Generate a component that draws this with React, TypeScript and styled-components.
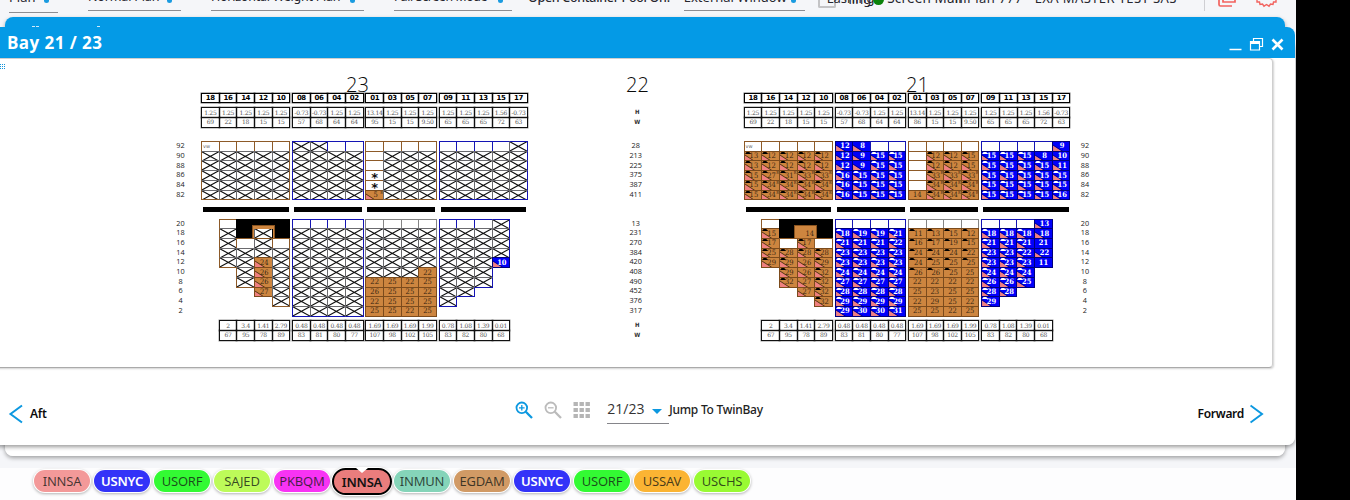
import React from 'react';
import styled, { createGlobalStyle, css } from 'styled-components';

const Global = createGlobalStyle`
  * { box-sizing: border-box; }
  body { margin: 0; background: #000; font-family: "Noto Sans", "Open Sans", sans-serif; overflow: hidden; }
`;

/* ---------- application shell ---------- */

const Screen = styled.div`
  position: relative;
  width: 1296px;
  height: 500px;
  overflow: hidden;
  background: #f5f6f9;
  display: flex;
  flex-direction: column;
  justify-content: space-between;
`;

const Toolbar = styled.div`
  height: 17px;
  display: flex;
  align-items: flex-start;
  overflow: hidden;
  color: #26262e;
`;

const Select = styled.div<{ $w: number; $ml: number; $h?: number }>`
  flex: none;
  width: ${p => p.$w}px;
  height: ${p => p.$h ?? 11}px;
  margin-left: ${p => p.$ml}px;
  border-bottom: 1px solid #8d8d92;
  display: flex;
  justify-content: space-between;
  padding-right: 9px;
  overflow: hidden;
`;

const ToolText = styled.span<{ $size?: number; $up?: number; $ls?: number; $strong?: boolean; $ml?: number }>`
  flex: none;
  display: block;
  white-space: pre;
  font-size: ${p => p.$size ?? 13}px;
  line-height: 18px;
  height: 18px;
  letter-spacing: ${p => p.$ls ?? 0}px;
  font-weight: ${p => (p.$strong ? 500 : 400)};
  margin-top: -${p => p.$up ?? 12}px;
  margin-left: ${p => p.$ml ?? 0}px;
`;

const CaretTip = styled.i`
  width: 5px;
  height: 4px;
  margin-top: -1px;
  border-radius: 0 0 3px 3px;
  background: #1a9be0;
`;

const CheckTip = styled.i`
  flex: none;
  width: 18px;
  height: 8px;
  margin-left: 13px;
  border: 2px solid #c4c4c6;
  border-top: 0;
  border-radius: 0 0 2px 2px;
`;

const Dot = styled.i`
  flex: none;
  width: 11px;
  height: 11px;
  border-radius: 50%;
  margin: -6px 3px 0 2px;
  background: #0a820a;
`;

const Rule = styled.i`
  flex: none;
  width: 1px;
  height: 11px;
  margin-left: auto;
  margin-right: 12px;
  background: #cfcfd3;
`;

const ToolIcons = styled.svg`
  flex: none;
  margin-right: 19px;
`;

/* ---------- floating windows ---------- */

const BackWindow = styled.div`
  position: absolute;
  left: 5px;
  top: 17px;
  width: 1280px;
  height: 439px;
  border-radius: 8px;
  background: linear-gradient(#049ae6 0 30px, #fff 30px);
  box-shadow: 0 2px 4px rgba(0, 0, 0, 0.35);
`;

const HiddenTitle = styled.div`
  display: flex;
  padding: 9px 0 0 27px;
  i { height: 1px; background: #cfeafa; width: 3px; margin-right: 1px; }
  i:last-child { margin-left: 57px; }
`;

const Window = styled.div`
  position: absolute;
  left: -10px;
  top: 27px;
  width: 1305px;
  height: 418px;
  border-radius: 8px;
  overflow: hidden;
  background: #fff;
  display: flex;
  flex-direction: column;
`;

const WindowShadow = styled.div`
  position: absolute;
  left: -10px;
  top: 40px;
  width: 1305px;
  height: 405px;
  border-radius: 0 8px 8px 0;
  box-shadow: 0 2px 4px rgba(0, 0, 0, 0.4);
`;

const TitleBar = styled.div`
  height: 31px;
  flex: none;
  background: #049ae6;
  display: flex;
  justify-content: space-between;
  padding: 0 11px 0 17px;
`;

const WindowTitle = styled.h1`
  margin: 4px 0 0;
  font: 700 17px/24px "Open Sans", "Noto Sans", sans-serif;
  letter-spacing: 0.45px;
  color: #fff;
`;

const Controls = styled.div`
  display: flex;
  padding-top: 10px;
`;

const Panel = styled.div`
  flex: none;
  width: 1283px;
  height: 310px;
  border: 1px solid #cfcfcf;
  border-bottom-color: #aaa;
  border-radius: 4px;
  box-shadow: 1px 1px 2px rgba(0, 0, 0, 0.18);
  padding-left: 9px;
`;

const PanelTop = styled.div`
  display: flex;
  height: 34px;
`;

const Grip = styled.div`
  width: 6px;
  height: 6px;
  margin: 5px 211px 0 0;
  background:
    repeating-linear-gradient(transparent 0 1px, #fff 1px 2px),
    repeating-linear-gradient(90deg, #1295dc 0 1px, transparent 1px 2px);
`;

const BayNo = styled.div`
  width: 280px;
  padding: 13px 0 0 1px;
  text-align: center;
  font: 300 20px/26px "Open Sans", "Noto Sans", sans-serif;
  color: #0a0a0a;
`;

const Board = styled.div`
  display: flex;
  padding-left: 160px;
`;

/* ---------- bay plan ---------- */

const Plan = styled.div`
  width: 326.8px;
  flex: none;
`;

const Strip = styled.div<{ $mt: number; $h: number }>`
  display: flex;
  margin-top: ${p => p.$mt}px;
  height: ${p => p.$h}px;
`;

const Group = styled.div<{ $cols: number; $pad?: boolean; $rows: number }>`
  flex: none;
  display: grid;
  width: ${p => (p.$cols + (p.$pad ? 1 : 0)) * 17.75}px;
  padding-left: ${p => (p.$pad ? 17.75 : 0)}px;
  padding-right: 0.5px;
  margin-right: 2.3px;
  grid-template-columns: repeat(${p => p.$cols}, minmax(0, 1fr));
  grid-template-rows: repeat(${p => p.$rows}, minmax(0, 1fr));
`;

const boxed = css`
  display: flex;
  align-items: center;
  justify-content: center;
  margin: 0 -1px -1px 0;
  white-space: nowrap;
  overflow: hidden;
`;

const HeadCell = styled.div`
  ${boxed}
  border: 1px solid #000;
  box-shadow: 0 0 0 0.5px rgba(0, 0, 0, 0.55);
  font: 700 7px/8px "DejaVu Sans", sans-serif;
  letter-spacing: -0.4px;
  color: #000;
`;

const DataCell = styled.div`
  ${boxed}
  border: 1px solid #111;
  box-shadow: 0 0 0 0.5px rgba(0, 0, 0, 0.4);
  font: 400 6px/8px "DejaVu Serif", serif;
  letter-spacing: -0.3px;
  color: #555;
`;

type Tone = 'brown' | 'blue' | 'grey';
const line: Record<Tone, string> = { brown: '#8d5a28', blue: '#1414b4', grey: '#858585' };

interface Edges { top: boolean; right: boolean; bottom: boolean; left: boolean }

const Slot = styled.div<{ $tone: Tone; $kind: 'gap' | 'open' | 'cross' | 'load' | 'hatch'; $edges: Edges }>`
  ${boxed}
  position: relative;
  border: 1px solid ${p => line[p.$tone]};
  font: 400 7.5px/8px "DejaVu Sans Condensed", "DejaVu Sans", sans-serif;
  color: #111;
  ${p => p.$kind === 'gap' && css`visibility: hidden;`}
  ${p => p.$kind === 'open' && css`background: #fff;`}
  ${p => p.$kind === 'cross' && css`
    background: #fff;
    border-color: ${(['top', 'right', 'bottom', 'left'] as const).map(s => (p.$edges[s] ? line[p.$tone] : '#6a6a6e')).join(' ')};
  `}
  ${p => p.$kind === 'hatch' && css`background: #000; border-color: #000;`}
  ${p => p.$kind === 'load' && (p.$tone === 'blue'
    ? css`background: #0000fa; border-color: #00007c; color: #fff; font: 700 7.5px/8px "DejaVu Serif Condensed", "DejaVu Serif", serif;`
    : css`background: #cd853f; border-color: #7c4b1c; color: #3b2813; font: 400 7.5px/8px "DejaVu Serif Condensed", "DejaVu Serif", serif;`)}
`;

const Mark = styled.svg`
  position: absolute;
  left: -1px;
  top: -1px;
  width: calc(100% + 2px);
  height: calc(100% + 2px);
`;

const Value = styled.span<{ $shift?: boolean }>`
  position: relative;
  padding-left: ${p => (p.$shift ? 2 : 0)}px;
`;

const Star = styled.b`
  font: 700 13px/8px "DejaVu Sans", sans-serif;
  padding-top: 5px;
`;

const Tiny = styled.sup`
  position: absolute;
  right: 0;
  top: -1px;
  font-size: 4px;
  line-height: 5px;
`;

const Note = styled.span`
  font: 400 5px/6px "DejaVu Sans", sans-serif;
  color: #666;
  margin-right: auto;
  padding-left: 1px;
`;

const Bar = styled.div<{ $cols: number }>`
  flex: none;
  width: ${p => p.$cols * 17.75 - 3}px;
  margin: 0 3.3px 0 2px;
  background: #000;
`;

const Riser = styled.div<{ $filled: boolean }>`
  position: absolute;
  left: 50.5px;
  top: 6px;
  width: 23px;
  height: 14px;
  border: solid #cd853f;
  border-width: 4px 2px 0;
  outline: 1px solid #8a5420;
  outline-offset: -1px;
  background: ${p => (p.$filled ? '#cd853f' : 'transparent')};
  font: 400 7.5px/9px "DejaVu Serif Condensed", serif;
  color: #3b2813;
  text-align: right;
  padding-right: 1px;
`;

const Lower = styled.div`
  position: relative;
`;

/* Slot notation: "." no slot, "_" free, "x" blocked, "#" structure;
   otherwise a value followed by t (corner), c (cap) and r (reefer note). */
function SlotView({ code, tone, edges }: { code: string; tone: Tone; edges: Edges }) {
  const kind = code === '.' ? 'gap' : code === 'x' ? 'cross' : code === '#' ? 'hatch'
    : /^\d/.test(code) ? 'load' : 'open';
  const corner = kind === 'load' && code.includes('t');
  const cap = kind === 'load' && code.includes('c');
  return (
    <Slot $tone={tone} $kind={kind} $edges={edges}>
      {kind === 'cross' && (
        <Mark viewBox="0 0 18 10" preserveAspectRatio="none">
          <path d="M0.5 0.5 17.5 9.5M0.5 9.5 17.5 0.5" stroke="#111" strokeWidth="1.05" fill="none" />
        </Mark>
      )}
      {(corner || cap) && (
        <Mark viewBox="0 0 18 10" preserveAspectRatio="none">
          {corner && <path d="M1 4.2V9.5H9.5Z" fill="#f08080" />}
          {corner && <path d="M1 3.8 11 10" stroke={tone === 'blue' ? '#00006a' : '#2c1a0a'} strokeWidth="0.7" />}
          {cap && <path d="M1 2.8 2.5 1H5L7 2.8Z" fill={tone === 'blue' ? '#fff' : '#000'} />}
        </Mark>
      )}
      {kind === 'load' && <Value $shift={corner || cap}>{parseInt(code, 10)}</Value>}
      {code.includes('r') && <Tiny>R</Tiny>}
      {code === '*' && <Star>*</Star>}
      {code === 'vv' && <Note>vw</Note>}
    </Slot>
  );
}

interface Block { tone: Tone; cols: number; pad?: boolean; rows: string[] }

function BlockView({ block }: { block: Block }) {
  const cells = block.rows.map(r => r.split(' '));
  const empty = (y: number, x: number) => (cells[y]?.[x] ?? '.') === '.';
  return (
    <Group $cols={block.cols} $rows={cells.length} $pad={block.pad}>
      {cells.flatMap((r, y) => r.map((c, x) => (
        <SlotView
          key={`${y}-${x}`}
          code={c}
          tone={block.tone}
          edges={{ top: empty(y - 1, x), right: empty(y, x + 1), bottom: empty(y + 1, x), left: empty(y, x - 1) }}
        />
      )))}
    </Group>
  );
}

const heads = ['18 16 14 12 10', '08 06 04 02', '01 03 05 07', '09 11 13 15 17'];
const topFigures = (edge: string) => [
  ['1.25 1.25 1.25 1.25 1.25', '69 22 18 15 15'],
  ['-0.73 -0.73 1.25 1.25', '57 68 64 64'],
  ['13.14 1.25 1.25 1.25', `${edge} 15 15 9.50`],
  ['1.25 1.25 1.25 1.56 -0.73', '65 65 65 72 63'],
];
const bottomFigures = [
  ['2 3.4 1.41 2.79', '67 95 78 89'],
  ['0.48 0.48 0.48 0.48', '83 81 80 77'],
  ['1.69 1.69 1.69 1.99', '107 98 102 105'],
  ['0.78 1.08 1.39 0.01', '83 82 80 68'],
];

const X5 = 'x x x x x';
const X4 = 'x x x x';

const bay23: { top: Block[]; bottom: Block[] } = {
  top: [
    { tone: 'brown', cols: 5, rows: ['vv _ _ _ _', X5, X5, X5, X5, X5] },
    { tone: 'blue', cols: 4, rows: ['x x _ _', X4, X4, X4, X4, X4] },
    { tone: 'brown', cols: 4, rows: ['_ _ _ _', '_ x x x', '_ x x x', '* x x x', '* x x x', '5tr x x x'] },
    { tone: 'blue', cols: 5, rows: ['_ _ _ _ x', X5, X5, X5, X5, X5] },
  ],
  bottom: [
    { tone: 'brown', cols: 4, pad: true, rows: ['_ # # #', 'x # x #', 'x _ x _', X4, 'x x 24t x', '. x 26t x', '. x 26t x', '. . 27t x', '. . . x', '. . . .'] },
    { tone: 'blue', cols: 4, rows: ['_ _ _ _', X4, X4, X4, X4, X4, X4, X4, X4, X4] },
    { tone: 'grey', cols: 4, rows: ['_ _ _ _', X4, X4, X4, X4, 'x x x 22', '22 25 22 25', '26 25 25 22', '22 25 25 25', '25 25 22 25'] },
    { tone: 'blue', cols: 4, rows: ['_ _ _ x', X4, X4, X4, 'x x x 10t', 'x x x .', 'x x x .', 'x x . .', 'x . . .', '. . . .'] },
  ],
};

const bay21: { top: Block[]; bottom: Block[] } = {
  top: [
    { tone: 'brown', cols: 5, rows: ['vv _ _ _ _', '13tc 12tc 12tc 12tc 12tc', '13tc 12tc 12tc 12tc 12tc', '15tc 27tcr 31tcr 33tcr 33tcr', '15tc 34tcr 34tcr 34tcr 34tcr', '15tc 34tcr 34tcr 34tcr 34tcr'] },
    { tone: 'blue', cols: 4, rows: ['12t 8t _ _', '12t 9t 15tc 15tc', '12t 9t 15tc 15tc', '16tc 15tc 15tc 15tc', '16tc 15tc 15tc 15tc', '16tc 15tc 15tc 15tc'] },
    { tone: 'brown', cols: 4, rows: ['_ _ _ _', '_ 12tc 12tc 15tc', '_ 12tc 12tc 15tc', '_ 33tcr 33tcr 33tcr', '_ 34tcr 34tcr 34tcr', '14 34tcr 34tcr 34tcr'] },
    { tone: 'blue', cols: 5, rows: ['_ _ _ _ 9t', '15tc 15tc 15tc 8t 10t', '15tc 15tc 15tc 15tc 11t', '15tc 15tc 15tc 15tc 15tc', '15tc 15tc 15tc 15tc 15tc', '15tc 15tc 15tc 15tc 16tc'] },
  ],
  bottom: [
    { tone: 'brown', cols: 4, pad: true, rows: ['_ # # #', '15tc # # #', '17tc _ 17tc _', '25tc 28tc 28tc 28tc', '29tc 29tc 26t 29tc', '. 29tc 26t 32tc', '. 32tc 27t 32tc', '. . 27t 32tc', '. . . 32tc', '. . . .'] },
    { tone: 'blue', cols: 4, rows: ['_ _ _ _', '18tc 19tc 19tc 21tc', '21tc 21tc 21tc 22tc', '23tc 23tc 23tc 23tc', '23tc 23tc 23tc 23tc', '24tc 24tc 24tc 24tc', '27tc 27tc 27tc 27tc', '28tc 28tc 28tc 28tc', '29tc 29tc 29tc 29tc', '29tc 30tc 30tc 31tc'] },
    { tone: 'grey', cols: 4, rows: ['_ _ _ _', '11c 13c 15c 12c', '16c 17c 19c 15c', '24c 24c 24c 22c', '24c 25c 25c 25c', '26c 26c 25c 25', '22 22 22 22', '25 23 25 25', '22 29 25 22', '25 25 22 25'] },
    { tone: 'blue', cols: 4, rows: ['_ _ _ 13t', '18tc 18tc 18tc 18t', '21tc 21tc 21tc 21', '23tc 23tc 22tc 22t', '23tc 23tc 23tc 11', '24tc 24tc 24tc .', '26tc 26tc 25tc .', '28tc 28tc . .', '29tc . . .', '. . . .'] },
  ],
};

function Figures({ groups, mt, pad }: { groups: string[][]; mt: number; pad?: boolean }) {
  return (
    <Strip $mt={mt} $h={19.5}>
      {groups.map((g, i) => (
        <Group key={i} $cols={g[0].split(' ').length} $rows={2} $pad={pad && i === 0}>
          {g.flatMap((r, y) => r.split(' ').map((v, x) => <DataCell key={`${y}-${x}`}>{v}</DataCell>))}
        </Group>
      ))}
    </Strip>
  );
}

function BayPlan({ bay, edge, riser }: { bay: typeof bay23; edge: string; riser?: string }) {
  return (
    <Plan>
      <Strip $mt={0} $h={9.3}>
        {heads.map(h => (
          <Group key={h} $cols={h.split(' ').length} $rows={1}>
            {h.split(' ').map(v => <HeadCell key={v}>{v}</HeadCell>)}
          </Group>
        ))}
      </Strip>
      <Figures groups={topFigures(edge)} mt={5} />
      <Strip $mt={14} $h={58.7}>{bay.top.map((b, i) => <BlockView key={i} block={b} />)}</Strip>
      <Strip $mt={7.3} $h={5}>{[5, 4, 4, 5].map((n, i) => <Bar key={i} $cols={n} />)}</Strip>
      <Lower>
        <Strip $mt={6.8} $h={97.2}>{bay.bottom.map((b, i) => <BlockView key={i} block={b} />)}</Strip>
        <Riser $filled={!!riser}>{riser}</Riser>
      </Lower>
      <Figures groups={bottomFigures} mt={4.6} pad />
    </Plan>
  );
}

/* ---------- row labels ---------- */

const Labels = styled.div<{ $w: number; $pl?: number }>`
  flex: none;
  width: ${p => p.$w}px;
  padding-left: ${p => p.$pl ?? 0}px;
  padding-top: 48.3px;
  text-align: center;
  font: 400 7.3px/9.68px "Open Sans", "Noto Sans", sans-serif;
  color: #222;
`;

const LabelSet = styled.div`
  height: 77.3px;
`;

const Units = styled.div`
  margin-top: -34px;
  height: 34px;
  padding-left: 3px;
  font: 700 6px/10px "DejaVu Sans Condensed", "DejaVu Sans", sans-serif;
  color: #333;
`;

const FootUnits = styled(Units)`
  margin-top: 24px;
  height: 20px;
`;

const upperRows = [92, 90, 88, 86, 84, 82];
const lowerRows = [20, 18, 16, 14, 12, 10, 8, 6, 4, 2];

function LabelColumn({ width, shift, upper, lower, units }: { width: number; shift?: number; upper: number[]; lower: number[]; units?: boolean }) {
  return (
    <Labels $w={width} $pl={shift}>
      {units && <Units><div>H</div><div>W</div></Units>}
      <LabelSet>{upper.map((v, i) => <div key={i}>{v}</div>)}</LabelSet>
      <LabelSet>{lower.map((v, i) => <div key={i}>{v}</div>)}</LabelSet>
      {units && <FootUnits><div>H</div><div>W</div></FootUnits>}
    </Labels>
  );
}

/* ---------- window footer ---------- */

const Footer = styled.div`
  flex: 1;
  display: flex;
  justify-content: space-between;
  padding: 32px 31px 0 18px;
  font: 500 12px/18px "Noto Sans", sans-serif;
  color: #0b0b0b;
`;

const NavButton = styled.div`
  display: flex;
  align-items: center;
  height: 28px;
  gap: 6px;
  font-weight: 600;
  font-size: 12px;
  letter-spacing: -0.3px;
`;

const Tools = styled.div`
  display: flex;
  align-items: flex-start;
  margin-left: 34px;
`;

const Magnify = styled.svg`
  flex: none;
  margin: 1px 11px 0 0;
`;

const Dots = styled.svg`
  flex: none;
  margin-top: 1px;
`;

const Jump = styled.div`
  display: flex;
  width: 62px;
  height: 24px;
  margin-left: 17px;
  justify-content: space-between;
  border-bottom: 1px solid #85858a;
  font: 400 14px/17px "Open Sans", "Noto Sans", sans-serif;
  color: #333;
  padding-right: 7px;
`;

const Caret = styled.i`
  margin-top: 9px;
  width: 0;
  height: 0;
  border: solid transparent;
  border-width: 5px 5px 0;
  border-top-color: #0c98e0;
`;

const JumpLabel = styled.span`
  font-size: 12px;
  font-weight: 500;
  line-height: 20px;
  letter-spacing: -0.25px;
  color: #222;
`;

/* ---------- port legend ---------- */

const Legend = styled.div`
  height: 32px;
  background: #fdfdfe;
  display: flex;
  align-items: flex-start;
  padding: 2px 0 0 34px;
  gap: 4px;
`;

const Pill = styled.div<{ $bg: string; $bold?: boolean; $active?: boolean }>`
  position: relative;
  flex: none;
  width: 56px;
  height: 22px;
  border-radius: 11px;
  background: ${p => p.$bg};
  color: ${p => (p.$active ? '#111' : p.$bold ? '#fff' : 'rgba(20, 25, 20, 0.78)')};
  font: ${p => (p.$bold || p.$active ? 600 : 400)} 13px/22px "Noto Sans", sans-serif;
  letter-spacing: -0.2px;
  text-align: center;
  white-space: nowrap;
  box-shadow: 0 0 0 1px #fff, 0 1px 3px 1px rgba(0, 0, 0, 0.3);
  ${p => p.$active && css`
    width: 60px;
    height: 27px;
    margin: -2px -2px 0;
    line-height: 25px;
    border: 2px solid #000;
    border-radius: 14px;
    &::before {
      content: '';
      position: absolute;
      left: 22px;
      top: -2px;
      border: solid transparent;
      border-width: 5px 6px 0;
      border-top-color: #fff;
    }
  `}
`;

const ports: { name: string; bg: string; bold?: boolean; active?: boolean }[] = [
  { name: 'INNSA', bg: '#f39999' },
  { name: 'USNYC', bg: '#3333f8', bold: true },
  { name: 'USORF', bg: '#33fa33' },
  { name: 'SAJED', bg: '#bdfb59' },
  { name: 'PKBQM', bg: '#f833f4' },
  { name: 'INNSA', bg: '#ea7d7d', active: true },
  { name: 'INMUN', bg: '#85d4b9' },
  { name: 'EGDAM', bg: '#d19a65' },
  { name: 'USNYC', bg: '#3333f8', bold: true },
  { name: 'USORF', bg: '#33fa33' },
  { name: 'USSAV', bg: '#fbb433' },
  { name: 'USCHS', bg: '#99fa33' },
];

const Magnifier = ({ color, plus }: { color: string; plus?: boolean }) => (
  <Magnify width="18" height="18" viewBox="0 0 18 18" fill="none" stroke={color}>
    <circle cx="6.8" cy="6.8" r="5.3" strokeWidth="1.8" />
    <path d="M10.8 10.8 17 17" strokeWidth="2.3" />
    <path d={plus ? 'M4 6.8H9.6M6.8 4V9.6' : 'M4 6.8H9.6'} strokeWidth="1.3" />
  </Magnify>
);

export default function App() {
  return (
    <>
      <Global />
      <Screen>
        <Toolbar>
          <Select $w={49} $ml={9} $h={13}><ToolText $up={12}>Plan</ToolText><CaretTip /></Select>
          <Select $w={93} $ml={30}><ToolText $up={12} $size={12.6} $ls={-0.2}>Normal Plan</ToolText><CaretTip /></Select>
          <Select $w={153} $ml={30}><ToolText $up={12} $size={12.5} $ls={-0.25}>Horizontal Weight Plan</ToolText><CaretTip /></Select>
          <Select $w={118} $ml={30}><ToolText $up={12} $size={12.3} $ls={-0.35}>Full Screen Mode</ToolText><CaretTip /></Select>
          <ToolText $ml={16} $up={11} $size={12.5} $strong $ls={-0.3}>Open Container Pool On:</ToolText>
          <Select $w={121} $ml={14}><ToolText $up={12}>External Window</ToolText><CaretTip /></Select>
          <CheckTip />
          <ToolText $ml={-9} $up={11} $size={13}>Lashing</ToolText>
          <ToolText $ml={-26} $up={10} $size={13}>ling</ToolText>
          <Dot />
          <ToolText $up={11} $size={13.5} $ls={0.15}>Screen Main</ToolText>
          <ToolText $ml={-12} $up={11} $size={13} $ls={0.4}>n Plan 777 - EXA MASTER TEST SAS</ToolText>
          <Rule />
          <ToolIcons width="60" height="8" viewBox="0 0 60 8" fill="none" stroke="#f2635f">
            <path d="M2 0V4.5Q2 6 3.5 6H15M6 0V2H18V0" strokeWidth="1.7" />
            <path d="M40 0 40 2 42.5 2 43 4.5 45.5 4 47 6.2 49.5 4.5 52 6.2 53.5 4 56 4.5 56.5 2 59 2V0" strokeWidth="1.4" />
          </ToolIcons>
        </Toolbar>

        <BackWindow>
          <HiddenTitle><i /><i /><i /></HiddenTitle>
        </BackWindow>
        <WindowShadow />
        <Window>
          <TitleBar>
            <WindowTitle>Bay 21 / 23</WindowTitle>
            <Controls>
              <svg width="56" height="15" viewBox="0 0 56 15" fill="none" stroke="#fff">
                <path d="M1.5 12.5H13.5" strokeWidth="1.6" />
                <path d="M25.5 4V1.5H34.5V9.5H32" strokeWidth="1.2" />
                <path d="M22.5 4.5H31.5V13H22.5Z" strokeWidth="1.2" />
                <path d="M22.5 5.5H31.5" strokeWidth="3" />
                <path d="M44.5 2.5 54.5 12.5M54.5 2.5 44.5 12.5" strokeWidth="2.6" />
              </svg>
            </Controls>
          </TitleBar>
          <Panel>
            <PanelTop>
              <Grip />
              <BayNo>23</BayNo>
              <BayNo>22</BayNo>
              <BayNo>21</BayNo>
            </PanelTop>
            <Board>
              <LabelColumn width={41} upper={upperRows} lower={lowerRows} />
              <BayPlan bay={bay23} edge="95" />
              <LabelColumn width={215.8} shift={0} upper={[28, 213, 225, 375, 387, 411]} lower={[13, 231, 270, 384, 420, 408, 490, 452, 376, 317]} units />
              <BayPlan bay={bay21} edge="86" riser="14" />
              <LabelColumn width={29} upper={upperRows} lower={lowerRows} />
            </Board>
          </Panel>
          <Footer>
            <NavButton>
              <svg width="16" height="20" viewBox="0 0 16 20" fill="none" stroke="#0c98e0" strokeWidth="2"><path d="M14 1.5 2.5 10 14 18.5" /></svg>
              Aft
            </NavButton>
            <Tools>
              <Magnifier color="#0c98e0" plus />
              <Magnifier color="#bbb" />
              <Dots width="17" height="18" viewBox="0 0 17 18" fill="#b5b5b5">
                {[0, 6, 12].map(x => [1, 7, 13].map(y => <rect key={`${x}${y}`} x={x + 0.5} y={y} width="4.4" height="4" />))}
              </Dots>
              <Jump>21/23<Caret /></Jump>
              <JumpLabel>Jump To TwinBay</JumpLabel>
            </Tools>
            <NavButton>
              Forward
              <svg width="14" height="20" viewBox="0 0 14 20" fill="none" stroke="#0c98e0" strokeWidth="2"><path d="M0.5 1.5 12 10 0.5 18.5" /></svg>
            </NavButton>
          </Footer>
        </Window>

        <Legend>
          {ports.map((p, i) => <Pill key={i} $bg={p.bg} $bold={p.bold} $active={p.active}>{p.name}</Pill>)}
        </Legend>
      </Screen>
    </>
  );
}
